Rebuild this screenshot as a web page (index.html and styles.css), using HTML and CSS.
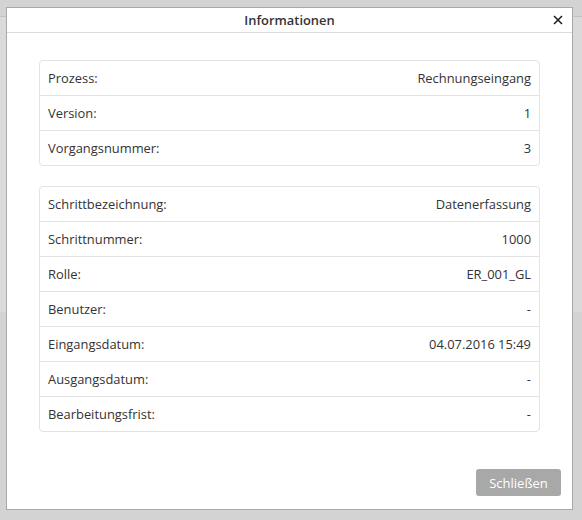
FILE: index.html
```html
<!DOCTYPE html>
<html lang="de">
<head>
    <meta charset="UTF-8">
    <title>Informationen</title>
    <link rel="stylesheet" href="styles.css">
</head>
<body>
    <div class="backdrop">
        <div class="backdrop-top"></div>
        <div class="backdrop-mid"></div>
        <div class="backdrop-low"></div>
    </div>

    <div class="dialog">
        <div class="dialog-header">
            <span class="dialog-title">Informationen</span>
            <span class="close-button">
                <svg width="10" height="10" viewBox="0 0 10 10">
                    <path d="M1 1 L9 9 M9 1 L1 9" stroke="#1a1a1a" stroke-width="1.5" fill="none"/>
                </svg>
            </span>
        </div>

        <div class="dialog-body">
            <ul class="info-list">
                <li class="info-row"><span>Prozess:</span><span>Rechnungseingang</span></li>
                <li class="info-row"><span>Version:</span><span>1</span></li>
                <li class="info-row"><span>Vorgangsnummer:</span><span>3</span></li>
            </ul>
            <ul class="info-list">
                <li class="info-row"><span>Schrittbezeichnung:</span><span>Datenerfassung</span></li>
                <li class="info-row"><span>Schrittnummer:</span><span>1000</span></li>
                <li class="info-row"><span>Rolle:</span><span>ER_001_GL</span></li>
                <li class="info-row"><span>Benutzer:</span><span>-</span></li>
                <li class="info-row"><span>Eingangsdatum:</span><span>04.07.2016 15:49</span></li>
                <li class="info-row"><span>Ausgangsdatum:</span><span>-</span></li>
                <li class="info-row"><span>Bearbeitungsfrist:</span><span>-</span></li>
            </ul>
        </div>

        <div class="dialog-footer">
            <button class="close-btn">Schließen</button>
        </div>
    </div>
</body>
</html>
```

FILE: styles.css
```css
/* Reset */
body {
    margin: 0;
    padding: 0;
    font-family: "Open Sans", sans-serif;
    font-size: 12.9px;
    color: #333;
    background-color: #d5d5d5;
}

/* Page behind the overlay */
.backdrop {
    height: 520px;
    display: flex;
    flex-direction: column;
}

.backdrop-top {
    height: 16px;
    background-color: #d3d3d3;
    border-bottom: 1px solid #c2c2c2;
}

.backdrop-mid {
    height: 295px;
    background-color: #dadada;
}

.backdrop-low {
    flex: 1;
    background-color: #d3d3d3;
}

/* Dialog */
.dialog {
    position: absolute;
    top: 7px;
    left: 6px;
    width: 565px;
    height: 501px;
    background-color: #fff;
    border: 1px solid #a9a9a9;
    display: flex;
    flex-direction: column;
}

.dialog-header {
    height: 24px;
    border-bottom: 1px solid #dcdcdc;
    display: flex;
    align-items: center;
    justify-content: center;
    position: relative;
}

.dialog-title {
    font-weight: 600;
    color: #333;
}

.close-button {
    position: absolute;
    right: 9px;
    top: 7px;
    display: flex;
}

.dialog-body {
    padding: 27px 32px 0 32px;
    flex: 1;
}

.info-list {
    list-style: none;
    margin: 0 0 20px 0;
    padding: 0;
    border: 1px solid #e3e3e3;
    border-radius: 4px;
}

.info-row {
    height: 34px;
    display: flex;
    align-items: center;
    justify-content: space-between;
    padding: 0 8px;
    border-top: 1px solid #e3e3e3;
}

.info-row:first-child {
    border-top: none;
}

.dialog-footer {
    display: flex;
    justify-content: flex-end;
    padding: 0 11px 13px 0;
}

.close-btn {
    font-family: "Open Sans", sans-serif;
    font-size: 13px;
    color: #fff;
    background-color: #a8a8a8;
    border: none;
    border-radius: 3px;
    width: 85px;
    height: 27px;
    padding: 0;
}
```
